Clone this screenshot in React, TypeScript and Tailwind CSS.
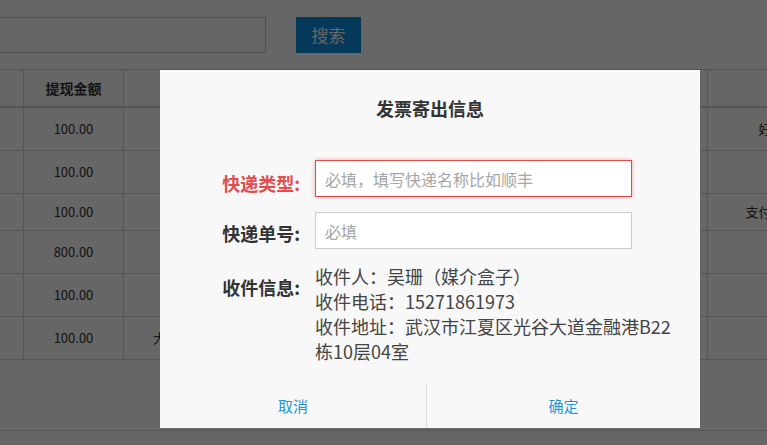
import { useEffect, useRef } from "react";

const rows = [
  { h: "h-[43px]", amount: "100.00", note: "", side: "好评返" },
  { h: "h-[43px]", amount: "100.00", note: "", side: "" },
  { h: "h-[37px]", amount: "100.00", note: "", side: "支付宝提现" },
  { h: "h-[43px]", amount: "800.00", note: "", side: "" },
  { h: "h-[43px]", amount: "100.00", note: "", side: "" },
  { h: "h-[43px]", amount: "100.00", note: "大额提现申请", side: "" },
];

function BackgroundPage() {
  return (
    <div className="text-[#333]">
      <div className="flex pt-[17px]">
        <div className="h-[36px] w-[266px] border border-l-0 border-[#c6c6c6] bg-white" />
        <button className="ml-[30px] h-[36px] w-[65px] bg-[#0b8fe2] text-[17px] text-white">搜索</button>
      </div>

      <div className="mt-[16px] border-t border-[#d4d4d4]">
        <div className="flex h-[38px] border-b-2 border-[#d4d4d4] text-[14px] font-bold">
          <div className="w-[24px] shrink-0 border-r border-[#d4d4d4]" />
          <div className="flex w-[100px] shrink-0 items-center justify-center border-r border-[#d4d4d4]">提现金额</div>
          <div className="w-[300px] shrink-0 border-r border-[#d4d4d4]" />
          <div className="w-[284px] shrink-0 border-r border-[#d4d4d4]" />
          <div className="w-[140px] shrink-0" />
        </div>
        {rows.map((r, i) => (
          <div key={i} className={`flex ${r.h} border-b border-[#d4d4d4] text-[13px]`}>
            <div className="w-[24px] shrink-0 border-r border-[#d4d4d4]" />
            <div className="flex w-[100px] shrink-0 items-center justify-center border-r border-[#d4d4d4]">{r.amount}</div>
            <div className="flex w-[300px] shrink-0 items-center border-r border-[#d4d4d4] pl-[29px]">{r.note}</div>
            <div className="w-[284px] shrink-0 border-r border-[#d4d4d4]" />
            <div className="flex w-[140px] shrink-0 items-center justify-center whitespace-nowrap">{r.side}</div>
          </div>
        ))}
      </div>

      <div className="mt-[70px] h-[20px] border-t border-[#d4d4d4]" />
    </div>
  );
}

function InvoiceDialog() {
  const firstInput = useRef<HTMLInputElement>(null);

  useEffect(() => {
    firstInput.current?.focus();
  }, []);

  return (
    <div className="absolute left-[160px] top-[70px] h-[358px] w-[540px] bg-[#f8f8f8]">
      <h2 className="pt-[26px] text-center text-[18px] font-bold leading-[24px] text-[#333]">发票寄出信息</h2>

      <div className="mt-[40px]">
        <div className="flex items-center">
          <label className="w-[140px] pt-[9px] text-right text-[18px] font-bold leading-[24px] text-[#e24d4d]">快递类型:</label>
          <input
            ref={firstInput}
            className="ml-[15px] h-[37px] w-[317px] border border-[#e24848] bg-white pl-[9px] text-[16px] text-[#333] caret-[#333] shadow-[0_0_4px_rgba(226,72,72,0.45)] outline-none placeholder:text-[#a6a6a6]"
            placeholder="必填，填写快递名称比如顺丰"
          />
        </div>

        <div className="mt-[15px] flex items-center">
          <label className="w-[140px] pt-[5px] text-right text-[18px] font-bold leading-[24px] text-[#333]">快递单号:</label>
          <input
            className="ml-[15px] h-[37px] w-[317px] border border-[#cccccc] bg-white pl-[9px] text-[16px] text-[#333] outline-none placeholder:text-[#a6a6a6]"
            placeholder="必填"
          />
        </div>

        <div className="mt-[15px] flex items-start">
          <div className="w-[140px] pt-[11px] text-right text-[18px] font-bold leading-[24px] text-[#333]">收件信息:</div>
          <div className="ml-[15px] w-[360px] text-[18px] leading-[25px] text-[#444]">
            <p>收件人：吴珊（媒介盒子）</p>
            <p>收件电话：15271861973</p>
            <p>收件地址：武汉市江夏区光谷大道金融港B22栋10层04室</p>
          </div>
        </div>
      </div>

      <div className="mt-[20px] flex h-[44px] text-[15px] text-[#1f96d8]">
        <button className="flex w-[266px] items-center justify-center">取消</button>
        <button className="flex flex-1 items-center justify-center border-l border-[#dddddd]">确定</button>
      </div>
    </div>
  );
}

export default function App() {
  return (
    <div className="relative h-[445px] w-[767px] overflow-hidden bg-white font-['Noto_Sans_CJK_SC',sans-serif]">
      <BackgroundPage />
      <div className="absolute inset-0 bg-black/60" />
      <InvoiceDialog />
    </div>
  );
}
